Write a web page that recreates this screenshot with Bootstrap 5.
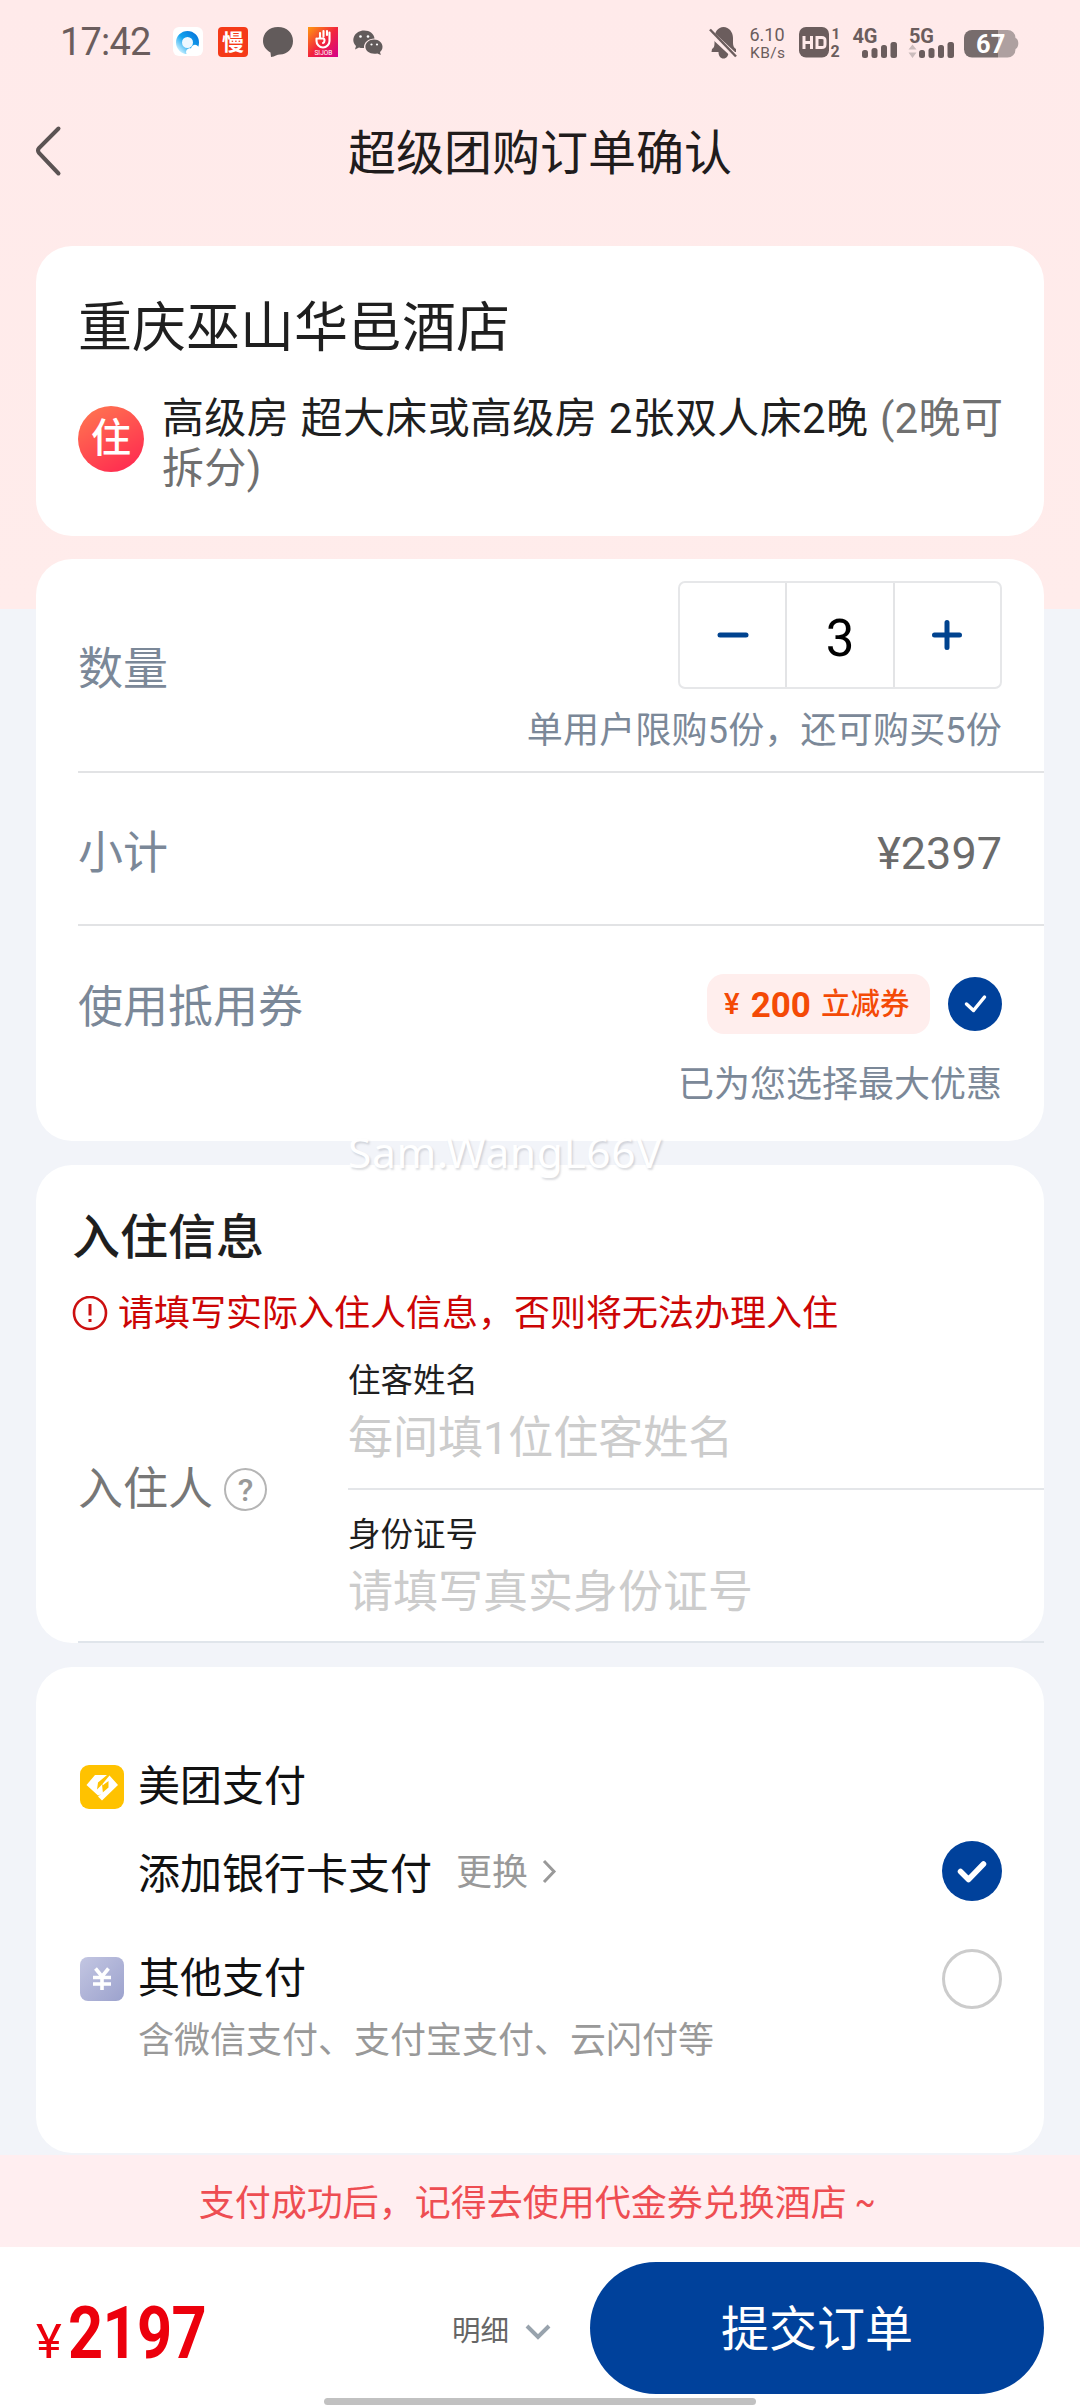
<!DOCTYPE html>
<html lang="zh-CN">
<head>
<meta charset="utf-8">
<meta name="viewport" content="width=device-width, initial-scale=1">
<title>超级团购订单确认</title>
<link href="https://cdn.jsdelivr.net/npm/bootstrap@5.3.0/dist/css/bootstrap.min.css" rel="stylesheet">
<style>
body{width:1080px;height:2408px;margin:0;overflow:hidden;background:linear-gradient(#ffeaea 0,#ffeceb 609px,#f2f4f9 609px,#f2f4f9 100%);font-family:Roboto,"Noto Sans CJK SC","Liberation Sans",sans-serif;color:#1f1f1f;line-height:1}
svg{display:block;flex:none}
svg text{font-family:Roboto,"Noto Sans CJK SC",sans-serif}
.statusbar{height:84px;padding:0 60px}
.status-apps{margin-left:17px}
.clock{font-size:38px;color:#6b5d5d;letter-spacing:-.8px}
.titlebar{height:140px;padding-left:34px;padding-right:34px}
.titlebar .side{width:60px;padding-bottom:7px}
.page-title{font-size:48px;font-weight:400;color:#211c1c}
.main-col{width:1008px}
.panel{background:#fff;border-radius:36px}
.fs45{font-size:45px}.fs36{font-size:36px}.fs33{font-size:32.5px}
.slate{color:#7b8898}
.hotel{height:290px;padding:56px 0 0 42px;margin-top:22px}
.hotel-name{font-size:54px;line-height:54px;font-weight:400;margin:0 0 38px}
.room{font-size:42px;line-height:50px;width:860px;letter-spacing:.35px;word-spacing:.8px}
.stay{width:66px;height:66px;border-radius:50%;background:linear-gradient(150deg,#ff7a50,#ff2350);color:#fff;font-size:40px;font-weight:500;margin-right:18px;margin-top:12px;flex:none}
.order{height:582px;margin-top:23px}
.line-row{margin-left:42px;padding-right:42px;border-bottom:2px solid #e2e3e5}
.stepper{width:324px;height:108px;border:2px solid #e6e7e9;border-radius:7px}
.stepper>*{flex:1}
.stepper .count{border:solid #e3e4e6;border-width:0 2px;font-size:51px;color:#000;padding-top:6px}
.limit{letter-spacing:.2px;margin-top:24px}
.coupon-row{margin-left:42px;padding:48px 42px 0 0}
.coupon{width:223px;height:60px;border-radius:17px;background:#ffeeed;color:#f44a06;padding:2px 0 0 17px;font-size:29.5px;font-weight:500}
.coupon b{font-size:35px;margin:0 10px 0 11px}
.watermark{position:absolute;left:348px;top:1124px;font:42.5px/56px "Noto Sans",sans-serif;color:#fff;text-shadow:1.5px 1.5px 2px rgba(90,95,110,.22);letter-spacing:.6px}
.guest{height:478px;margin-top:24px}
.guest-title{font-size:48px;line-height:48px;font-weight:500;margin:0;padding:49px 0 0 36px}
.warn{color:#cc0505;padding:34px 0 0 36px}
.guest-form{height:295px;margin:14px 0 0 42px}
.ph{color:#ccc;margin-top:18px}
.field-a{height:144px;padding-top:19px;border-bottom:2px solid #e4e6e9}
.field-b{padding-top:29px}
.who{width:270px;color:#777;padding-bottom:8px}
.guest-end{height:2px;background:#e0e5eb;margin-left:42px}
.help{width:43px;height:43px;border:2.5px solid #b5b5b5;border-radius:50%;font-size:32px;font-weight:500;color:#999;margin-left:11px}
.pay{height:486px;padding:76px 42px 0 44px;margin-top:24px}
.pay-row{font-size:42px;color:#111}
.pay-icon{margin-right:14px}
.radio-dot{width:60px;height:60px;border:3px solid #ccc;border-radius:50%}
.tip{height:92px;margin-top:2px;background:#ffeef0;color:#ee4d52;font-size:36px;padding:5px 4px 0 0}
.tilde{margin:-4px 0 0 6px;transform:scaleX(.85)}
.footer-bar{height:162px;background:#fff;padding:0 36px}
.price{color:#ec000c;width:416px;padding-top:50px}
.price .yen{font-size:49px}
.price .num{font-size:73px;font-weight:700;display:inline-block;transform:scaleX(.84);transform-origin:left;letter-spacing:-.8px;margin-left:6px}
.detail{width:138px;padding-top:71px;font-size:28.5px;color:#666}
.submit,.submit:hover{width:454px;height:132px;border-radius:66px;background:#00419b;color:#fff;font-size:48px;border:0;margin-top:15px}
.homebar{position:absolute;left:324px;top:2398px;width:432px;height:7px;border-radius:4px;background:#c1c1c1}
</style>
</head>
<body class="position-relative">
<header>
<div class="statusbar d-flex align-items-center">
  <span class="clock">17:42</span>
  <svg width="216" height="40" viewBox="168 22 216 40" class="status-apps me-auto">
    <defs><linearGradient id="sj" x1="0" y1="0" x2="1" y2="1"><stop offset="0" stop-color="#ff9a10"/><stop offset=".5" stop-color="#f2253c"/><stop offset="1" stop-color="#d4008c"/></linearGradient>
    <linearGradient id="qb" x1="1" y1="0" x2="0" y2="1"><stop offset="0" stop-color="#0878dc"/><stop offset=".5" stop-color="#12a3ee"/><stop offset="1" stop-color="#c9efff"/></linearGradient></defs>
    <rect x="173" y="27" width="30" height="29" rx="6" fill="#fff"/>
    <circle cx="187.500" cy="42.500" r="8.500" fill="#eef8ff" stroke="url(#qb)" stroke-width="6"/>
    <path d="M187 54.500c-3-4 2-7 4-6c1-5 7-5 8 0c4 0 4 6 0 6z" fill="#fff"/>
    <rect x="218" y="27" width="30" height="30" rx="4" fill="#f53a18"/>
    <text x="222" y="50" font-size="22" font-weight="700" fill="#fff">慢</text>
    <path d="M278 27c9 0 15 6 15 14s-6 13.500-13 13.500c-3 0-5 2-9 2.500l-.5-4.500C266 50 263 46 263 41c0-8 6-14 15-14z" fill="#625b5b"/>
    <rect x="308" y="27" width="30" height="30" fill="url(#sj)"/>
    <path d="M316.500 38.500v2.500a6.500 6.500 0 0 0 13 0V32.500M320 37.500v-4.500M323.500 36.500v-5.500M327 35v-4M318 38.500h5c2 0 2 4 0 4.500" fill="none" stroke="#fff" stroke-width="2.100" stroke-linecap="round"/>
    <text x="314.500" y="55" font-size="6.500" fill="#fff">SIJOB</text>
    <path d="M364 30.500c6 0 10 3.500 10.500 8-6 0-11 4-10.500 9.500-2 .2-3.500 0-5-.5l-4 2 1-3.500c-6-6-1-15.500 8-15.500z" fill="#625b5b"/>
    <path d="M374 39.500c5 0 8.500 3.300 8.500 7.300 0 2.500-1 4-2.500 5.300l.8 3-3.400-1.700c-6.500 1.500-12-2-12-6.600 0-4 3.600-7.300 8.600-7.300z" fill="#625b5b"/>
    <g fill="#fff"><circle cx="360.500" cy="36.500" r="1.300"/><circle cx="368" cy="36.500" r="1.300"/><circle cx="371.500" cy="44.500" r="1.100"/><circle cx="377" cy="44.500" r="1.100"/></g>
  </svg>
  <svg width="314" height="40" viewBox="708 22 314 40" fill="#6b5d5d">
    <path d="M714 49c2-1 2.500-3 2.500-6v-5c0-6 3.500-11 9-11s9.500 5 9.500 11v5c0 3 1 5 3 6v3h-7.500c0 4-2 6.500-5 6.500s-5-2.500-5-6.500h-7z"/>
    <path d="M710 31l29 27" stroke="#ffeaea" stroke-width="6"/><path d="M712 29.500l26 27" stroke="#6b5d5d" stroke-width="2.500"/>
    <text x="751.500" y="41" font-size="18" textLength="35">6.10</text><text x="752" y="58" font-size="15.500" textLength="35">KB/s</text>
    <rect x="801" y="27" width="30" height="30.500" rx="7"/>
    <path d="M806 36v13M813.500 36v13M806 42.500h7.500M819 37.500v10h4.500c3 0 3.500-1 3.500-3v-4c0-2-.5-3-3.500-3z" fill="none" stroke="#ffeaea" stroke-width="3"/>
    <text x="833.500" y="39" font-size="15" font-weight="700">1</text><text x="832.500" y="57" font-size="16" font-weight="700">2</text>
    <text x="854.500" y="42.500" font-size="20" font-weight="700" textLength="25">4G</text>
    <text x="911" y="42.500" font-size="20" font-weight="700" textLength="25">5G</text>
    <rect x="864" y="50" width="6" height="8" rx="2.500"/><rect x="873.500" y="48" width="6" height="10" rx="2.500"/><rect x="883" y="45" width="6" height="13" rx="2.500"/><rect x="892.500" y="42" width="6.500" height="16" rx="2.500"/>
    <rect x="921" y="50" width="6" height="8" rx="2.500"/><rect x="930.500" y="48" width="6" height="10" rx="2.500"/><rect x="940" y="45" width="6" height="13" rx="2.500"/><rect x="949.500" y="42" width="6.500" height="16" rx="2.500"/>
    <path d="M914.500 44.500l4 5h-8zM914.500 58l4-5.500h-8z" fill="#cbbcbc"/>
    <path d="M974 30h26v27.500h-26a8 8 0 0 1-8-8V38a8 8 0 0 1 8-8z" fill="#776c6c"/>
    <path d="M1000 30h9.500a8 8 0 0 1 8 8c4 1 3.500 10 0 11v.5a8 8 0 0 1-8 8H1000z" fill="#aea0a0"/>
    <text x="978" y="53" font-size="25.500" font-weight="700" fill="#fff">67</text>
  </svg>
</div>
<nav class="titlebar d-flex align-items-center justify-content-between">
  <div class="side"><svg width="30" height="54" viewBox="34 128 30 54"><path d="M58.500 132.500L39 152q-2 2.500 0 5l19.500 20.500" fill="none" stroke="#5b5353" stroke-width="4" stroke-linecap="round"/></svg></div>
  <h1 class="page-title m-0">超级团购订单确认</h1>
  <div class="side"></div>
</nav>
</header>

<main class="main-col mx-auto">
  <section class="panel hotel">
    <h2 class="hotel-name">重庆巫山华邑酒店</h2>
    <div class="d-flex align-items-start">
      <span class="stay d-flex align-items-center justify-content-center">住</span>
      <div class="room">高级房 超大床或高级房 2张双人床2晚 <span style="color:#707070">(2晚可<br>拆分)</span></div>
    </div>
  </section>

  <section class="panel order">
    <div class="line-row d-flex justify-content-between align-items-center" style="height:214px">
      <span class="slate fs45 pt-2">数量</span>
      <div class="d-flex flex-column align-items-end">
        <div class="stepper d-flex">
          <span class="d-flex align-items-center justify-content-center"><svg width="32" height="32"><path d="M3 16h26" stroke="#00438f" stroke-width="5" stroke-linecap="round"/></svg></span>
          <span class="count d-flex align-items-center justify-content-center">3</span>
          <span class="d-flex align-items-center justify-content-center"><svg width="32" height="32"><path d="M3.500 16h25M16 3.500v25" stroke="#00438f" stroke-width="5" stroke-linecap="round"/></svg></span>
        </div>
        <span class="slate fs36 limit">单用户限购5份，还可购买5份</span>
      </div>
    </div>
    <div class="line-row d-flex justify-content-between align-items-center" style="height:153px;padding-top:9px">
      <span class="slate fs45">小计</span><span class="fs45" style="color:#6b6b6b">¥2397</span>
    </div>
    <div class="coupon-row d-flex justify-content-between">
      <span class="slate fs45" style="margin-top:11px">使用抵用券</span>
      <div class="d-flex flex-column align-items-end">
        <div class="d-flex align-items-center" style="gap:18px">
          <span class="coupon d-flex align-items-center"><span>¥</span><b>200</b><span>立减券</span></span>
          <svg width="54" height="54"><circle cx="27" cy="27" r="27" fill="#00419b"/><path d="M18.500 27l7 6.500L36.500 20" fill="none" stroke="#fff" stroke-width="3.500" stroke-linecap="round" stroke-linejoin="round"/></svg>
        </div>
        <span class="slate fs36" style="margin-top:33px">已为您选择最大优惠</span>
      </div>
    </div>
  </section>

  <section class="panel guest">
    <h2 class="guest-title">入住信息</h2>
    <div class="d-flex align-items-center warn fs36">
      <svg width="36" height="36" style="margin-right:10px"><circle cx="18" cy="17" r="16" fill="none" stroke="#cc1010" stroke-width="2.600"/><path d="M18 8v11.500M18 23v3" stroke="#cc1010" stroke-width="3"/></svg>
      <span>请填写实际入住人信息，否则将无法办理入住</span>
    </div>
    <div class="guest-form d-flex">
      <div class="who d-flex align-items-center fs45"><span>入住人</span><span class="help d-flex align-items-center justify-content-center">?</span></div>
      <div class="flex-grow-1">
        <div class="field-a"><div class="fs33">住客姓名</div><div class="fs45 ph">每间填1位住客姓名</div></div>
        <div class="field-b"><div class="fs33">身份证号</div><div class="fs45 ph">请填写真实身份证号</div></div>
      </div>
    </div>
    <div class="guest-end"></div>
  </section>

  <section class="panel pay">
    <div class="pay-row d-flex align-items-center" style="height:88px">
      <svg class="pay-icon" width="44" height="44"><rect width="44" height="44" rx="9" fill="#ffc200"/><path d="M15 10h12L18 17.500l-1 7 5-5 1 9-5 2L6.500 20z" fill="#fff"/><path d="M29.500 10.500L38 20 22 35.500l-4-4 10.500-9 0-6.500-6 4.500 0-1.500z" fill="#fff"/></svg>美团支付
    </div>
    <div class="pay-row d-flex align-items-center" style="height:84px;padding-left:58px">
      <span class="pt-1">添加银行卡支付</span><span class="fs36" style="color:#999;margin-left:24px">更换</span>
      <svg width="20" height="32" style="margin-left:12px;margin-top:-3px"><path d="M4 5l10 10.500L4 26" fill="none" stroke="#999" stroke-width="3"/></svg>
      <svg class="ms-auto" width="60" height="60" style="margin-top:-4px"><circle cx="30" cy="30" r="30" fill="#00419b"/><path d="M18.500 30.500l8 8L41.500 23" fill="none" stroke="#fff" stroke-width="5.500" stroke-linecap="round" stroke-linejoin="round"/></svg>
    </div>
    <div class="pay-row d-flex align-items-center" style="height:72px;margin-top:28px">
      <svg class="pay-icon" width="44" height="44"><defs><linearGradient id="yg" x1="0" y1="0" x2="1" y2="1"><stop offset="0" stop-color="#c3c6e2"/><stop offset="1" stop-color="#9ca2cd"/></linearGradient></defs><rect width="44" height="44" rx="8" fill="url(#yg)"/><path d="M15.500 11.500l6.500 8 6.500-8M13 20.500h18M13 27h18M22 20v13" fill="none" stroke="#fff" stroke-width="3.600"/></svg>其他支付
      <span class="radio-dot ms-auto"></span>
    </div>
    <div class="fs36" style="color:#999;padding:8px 0 0 58px">含微信支付、支付宝支付、云闪付等</div>
  </section>
</main>

<div class="tip d-flex align-items-center justify-content-center"><span>支付成功后，记得去使用代金券兑换酒店</span><span class="tilde">~</span></div>
<footer class="footer-bar d-flex align-items-start">
  <div class="price d-flex align-items-baseline"><span class="yen">¥</span><span class="num">2197</span></div>
  <div class="detail d-flex align-items-center"><span>明细</span>
    <svg width="30" height="24" style="margin-left:14px"><path d="M4 6l11 11L26 6" fill="none" stroke="#98a3ad" stroke-width="4"/></svg></div>
  <button class="btn submit p-0 pt-1">提交订单</button>
</footer>
<div class="watermark">Sam.WangL66V</div>
<div class="homebar"></div>
<script src="https://cdn.jsdelivr.net/npm/bootstrap@5.3.0/dist/js/bootstrap.bundle.min.js"></script>
</body>
</html>
